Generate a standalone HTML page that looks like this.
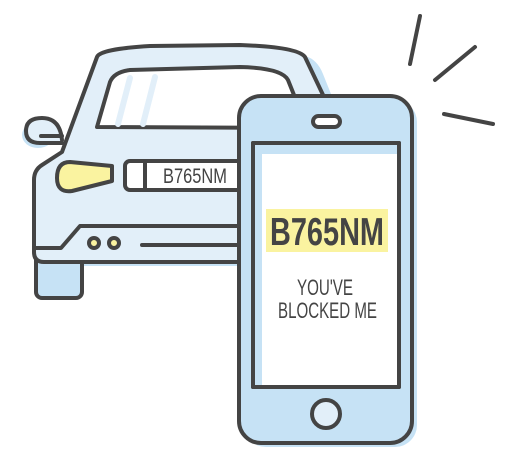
<!DOCTYPE html>
<html><head><style>
html,body{margin:0;padding:0;background:#fff;width:515px;height:466px;overflow:hidden}
svg{display:block}
text{font-family:"Liberation Sans","DejaVu Sans",sans-serif}
</style></head><body>
<svg width="515" height="466" viewBox="0 0 515 466">
<g stroke="#444" stroke-width="4" stroke-linecap="round" stroke-linejoin="round">
<path d="M100 62 Q110 50 160 48 L300 52 Q312 55 318 70 L330 100 L330 262 L40 262 L38 178 L66 152 Z" fill="#c6e2f5" stroke="none" transform="translate(5,4)"/>
<ellipse cx="41" cy="131" rx="16" ry="13" fill="#c6e2f5" stroke="none" transform="translate(-3,4)"/>
<path d="M62 140 Q60 118 42 118 Q26 118 26 131 Q26 143 40 143 L62 143" fill="#e2eff9"/>
<path d="M41 136 L62 136" fill="none"/>
<rect x="36" y="250" width="46" height="48" rx="6" fill="#c6e2f5"/>
<path d="M97 57 Q100 49 150 46 L240 45 Q298 47 305 57 L324 97 L324 262 L44 262 Q34 262 34 252 L34 180 Q34 170 42 165 L62 152 Z" fill="#e2eff9"/>
<path d="M97 127 L110 82 Q114 72 130 70 L240 67 Q282 68 288 80 L296 100 L296 128 Z" fill="#fff"/>
<path d="M130 78 L118 124 M155 77 L143 124" stroke="#e2eff9" stroke-width="6"/>
<path d="M70 162 L112 166 L112 181 L72 191 Q57 193 57 178 Q57 162 70 162 Z" fill="#faf3a0"/>
<rect x="125" y="161" width="140" height="29" rx="5" fill="#fff"/>
<path d="M145 162 L145 189" fill="none"/>
<text x="163" y="183" font-size="21" fill="#444" stroke="none" textLength="64" lengthAdjust="spacingAndGlyphs">B765NM</text>
<path d="M34 248 L61 248 L80 226 L250 226" fill="none"/>
<circle cx="94" cy="243" r="5" fill="#faf3a0"/>
<circle cx="114" cy="243" r="5" fill="#faf3a0"/>
<path d="M142 245 L250 245" fill="none"/>
<rect x="244" y="100" width="173" height="347" rx="22" fill="#c6e2f5" stroke="none"/>
<rect x="239" y="96" width="173" height="347" rx="22" fill="#c6e2f5"/>
<rect x="313" y="116" width="27" height="11" rx="5.5" fill="#fff"/>
<rect x="253" y="143" width="146" height="244" fill="#c6e2f5"/>
<rect x="262" y="154" width="135" height="231" fill="#fff" stroke="none"/>
<rect x="253" y="143" width="146" height="244" fill="none"/>
<circle cx="326" cy="414" r="14" fill="#e2eff9"/>
<path d="M420 16 L410 64 M475 47 L435 80 M444 114 L493 124" fill="none"/>
</g>
<rect x="266" y="209" width="122" height="43" fill="#faf3a0"/>
<text x="270" y="245" font-size="39" font-weight="bold" fill="#444" textLength="114" lengthAdjust="spacingAndGlyphs">B765NM</text>
<text x="297" y="295" font-size="22" fill="#444" textLength="56" lengthAdjust="spacingAndGlyphs">YOU'VE</text>
<text x="278" y="318" font-size="22" fill="#444" textLength="99" lengthAdjust="spacingAndGlyphs">BLOCKED ME</text>
</svg>
</body></html>
